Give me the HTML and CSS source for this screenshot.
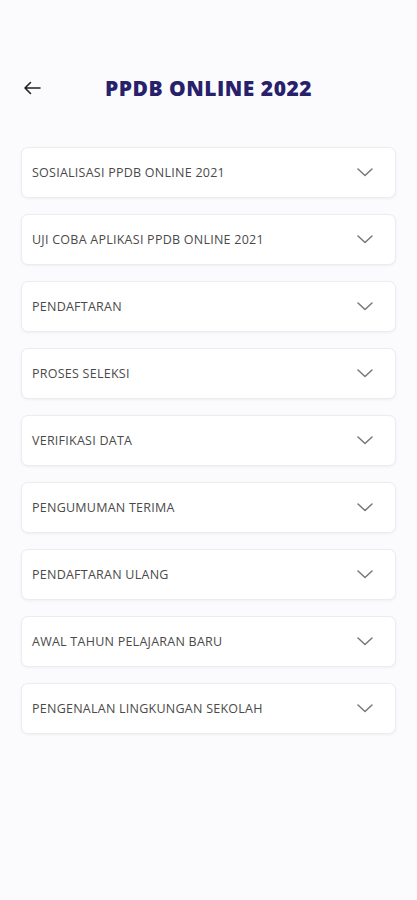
FILE: index.html
```html
<!DOCTYPE html>
<html>
<head>
<meta charset="utf-8">
<link rel="stylesheet" href="styles.css">
</head>
<body>
<div class="page">
  <header class="topbar">
    <svg class="back" width="18" height="14" viewBox="0 0 18 14"><path d="M17 7H2M7.5 1.5L2 7l5.5 5.5" fill="none" stroke="#222" stroke-width="1.6" stroke-linecap="round" stroke-linejoin="round"/></svg>
    <h1 class="title">PPDB ONLINE 2022</h1>
  </header>
  <div class="list">
    <div class="card"><span>SOSIALISASI PPDB ONLINE 2021</span><svg class="chev" width="16" height="9" viewBox="0 0 16 9"><path d="M1 1l7 6.5L15 1" fill="none" stroke="#777" stroke-width="1.5" stroke-linecap="round" stroke-linejoin="round"/></svg></div>
    <div class="card"><span>UJI COBA APLIKASI PPDB ONLINE 2021</span><svg class="chev" width="16" height="9" viewBox="0 0 16 9"><path d="M1 1l7 6.5L15 1" fill="none" stroke="#777" stroke-width="1.5" stroke-linecap="round" stroke-linejoin="round"/></svg></div>
    <div class="card"><span>PENDAFTARAN</span><svg class="chev" width="16" height="9" viewBox="0 0 16 9"><path d="M1 1l7 6.5L15 1" fill="none" stroke="#777" stroke-width="1.5" stroke-linecap="round" stroke-linejoin="round"/></svg></div>
    <div class="card"><span>PROSES SELEKSI</span><svg class="chev" width="16" height="9" viewBox="0 0 16 9"><path d="M1 1l7 6.5L15 1" fill="none" stroke="#777" stroke-width="1.5" stroke-linecap="round" stroke-linejoin="round"/></svg></div>
    <div class="card"><span>VERIFIKASI DATA</span><svg class="chev" width="16" height="9" viewBox="0 0 16 9"><path d="M1 1l7 6.5L15 1" fill="none" stroke="#777" stroke-width="1.5" stroke-linecap="round" stroke-linejoin="round"/></svg></div>
    <div class="card"><span>PENGUMUMAN TERIMA</span><svg class="chev" width="16" height="9" viewBox="0 0 16 9"><path d="M1 1l7 6.5L15 1" fill="none" stroke="#777" stroke-width="1.5" stroke-linecap="round" stroke-linejoin="round"/></svg></div>
    <div class="card"><span>PENDAFTARAN ULANG</span><svg class="chev" width="16" height="9" viewBox="0 0 16 9"><path d="M1 1l7 6.5L15 1" fill="none" stroke="#777" stroke-width="1.5" stroke-linecap="round" stroke-linejoin="round"/></svg></div>
    <div class="card"><span>AWAL TAHUN PELAJARAN BARU</span><svg class="chev" width="16" height="9" viewBox="0 0 16 9"><path d="M1 1l7 6.5L15 1" fill="none" stroke="#777" stroke-width="1.5" stroke-linecap="round" stroke-linejoin="round"/></svg></div>
    <div class="card"><span>PENGENALAN LINGKUNGAN SEKOLAH</span><svg class="chev" width="16" height="9" viewBox="0 0 16 9"><path d="M1 1l7 6.5L15 1" fill="none" stroke="#777" stroke-width="1.5" stroke-linecap="round" stroke-linejoin="round"/></svg></div>
  </div>
</div>
</body>
</html>
```
FILE: styles.css
```css
html, body {
  margin: 0;
  padding: 0;
  background: #fbfbfd;
}
.page {
  width: 417px;
  height: 900px;
  box-sizing: border-box;
  padding-top: 68px;
  font-family: "Open Sans", "Noto Sans", sans-serif;
}
.topbar {
  display: flex;
  align-items: center;
  height: 40px;
  padding-left: 23px;
}
.back {
  flex: none;
}
.title {
  margin: 0 0 0 64px;
  font-family: "Open Sans", sans-serif;
  font-weight: 800;
  font-size: 21px;
  letter-spacing: 0.5px;
  color: #27216b;
}
.list {
  display: flex;
  flex-direction: column;
  gap: 16px;
  margin-top: 39px;
  padding: 0 21px 0 21px;
}
.card {
  height: 51px;
  box-sizing: border-box;
  background: #fff;
  border: 1px solid #ececef;
  border-radius: 7px;
  box-shadow: 0 1px 3px rgba(0,0,0,0.05);
  display: flex;
  align-items: center;
  justify-content: space-between;
  padding: 0 22px 0 10px;
  font-size: 12.5px;
  font-weight: 400;
  color: #4a4a4a;
  letter-spacing: 0.25px;
}
.chev {
  flex: none;
}
```
